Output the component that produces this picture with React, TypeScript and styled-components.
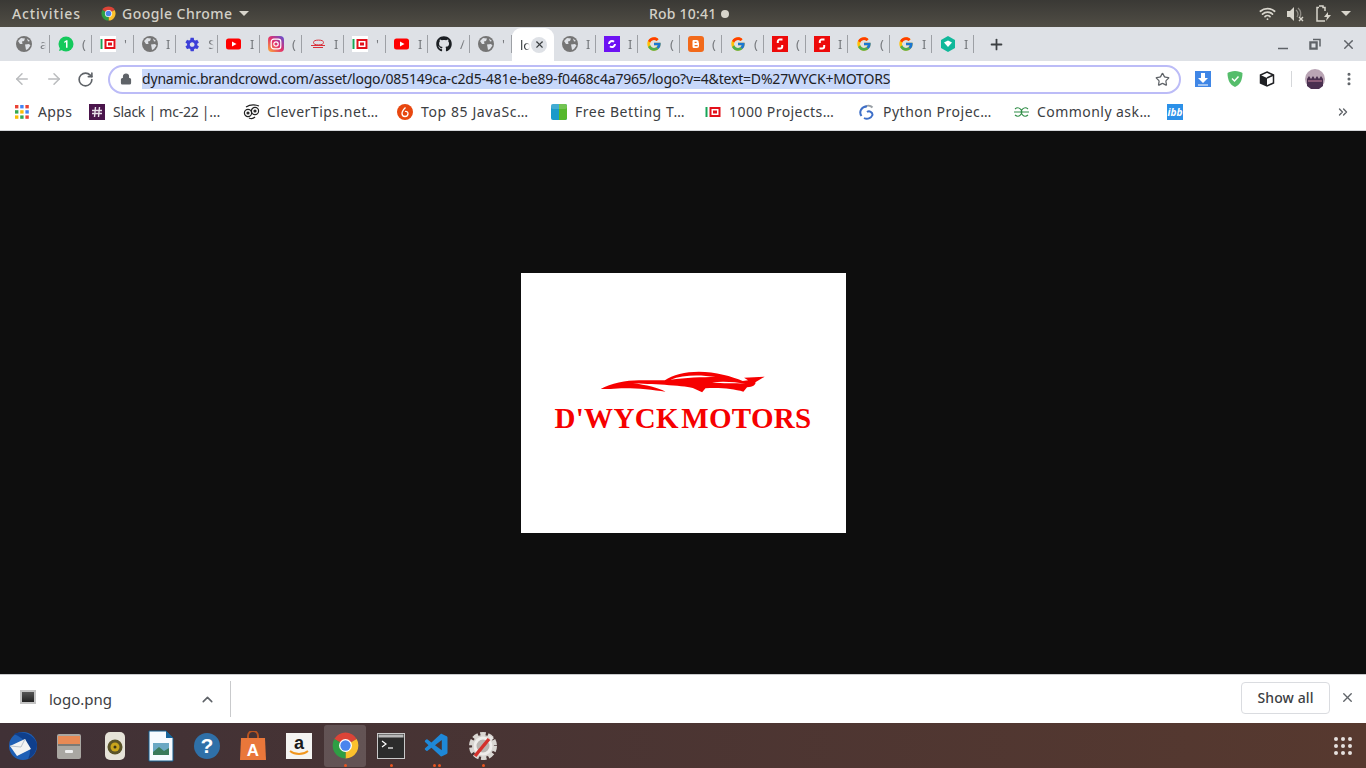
import styled, { createGlobalStyle } from "styled-components";
import { ArrowLeft, ArrowRight, ChevronUp, ChevronsRight, Lock, MoreVertical, Plus, RotateCw, Star, Wifi, X } from "lucide-react";
import { FaGithub } from "react-icons/fa";
import { FcGoogle } from "react-icons/fc";
import { IoMdSettings } from "react-icons/io";
import { VscVscode } from "react-icons/vsc";

const UI_FONT = `"Noto Sans", "Open Sans", sans-serif`;

const GlobalStyle = createGlobalStyle`
  html, body {
    margin: 0;
    height: 100%;
    overflow: hidden;
    background: #0e0e0e;
    font-family: ${UI_FONT};
  }
  * { box-sizing: border-box; }
`;

const ChromeLogo = ({ size }: { size: number }) => (
  <svg width={size} height={size} viewBox="0 0 48 48">
    <path d="M6.7 14A20 20 0 0 1 41.3 14L24 24Z" fill="#db4437" />
    <path d="M41.3 14A20 20 0 0 1 24 44L24 24Z" fill="#fbc02d" />
    <path d="M24 44A20 20 0 0 1 6.7 14L24 24Z" fill="#2f9e44" />
    <circle cx="24" cy="24" r="10" fill="#fff" />
    <circle cx="24" cy="24" r="8" fill="#4a85ed" />
  </svg>
);

const Globe = () => (
  <svg width="16" height="16" viewBox="0 0 16 16">
    <circle cx="8" cy="8" r="8" fill="#757575" />
    <path d="M2 5l3-3 4 .5L8 5 6 5.5 6.5 8 4 8ZM9 8.5l4-.5 1.5 1.5L12 13l-2 1-.5-3ZM11 2.5l3 2.5-2 .5Z" fill="#dee1e6" />
  </svg>
);

const Thousand = () => (
  <svg width="16" height="16" viewBox="0 0 16 16">
    <rect width="16" height="16" fill="#fff" />
    <rect x="0.5" y="3" width="2" height="10" fill="#18a558" />
    <rect x="4.5" y="3" width="11" height="10" fill="#e3111b" />
    <rect x="6.5" y="5" width="7" height="6" fill="#fff" />
    <rect x="8" y="6.5" width="4" height="3" fill="#e3111b" />
  </svg>
);

const YouTube = () => (
  <svg width="16" height="16" viewBox="0 0 16 16">
    <rect y="2.5" width="15" height="11" rx="2.5" fill="#f00" />
    <path d="M6 5.5L10.5 8 6 10.5Z" fill="#fff" />
  </svg>
);

const Instagram = () => (
  <svg width="16" height="16" viewBox="0 0 16 16">
    <defs>
      <linearGradient id="ig" x1="0" y1="1" x2="1" y2="0">
        <stop offset="0" stopColor="#fdb33b" />
        <stop offset="0.5" stopColor="#e1306c" />
        <stop offset="1" stopColor="#5b51d8" />
      </linearGradient>
    </defs>
    <rect width="16" height="16" rx="4" fill="url(#ig)" />
    <rect x="3.2" y="3.2" width="9.6" height="9.6" rx="2.6" fill="none" stroke="#fff" strokeWidth="1.2" />
    <circle cx="8" cy="8" r="2.2" fill="none" stroke="#fff" strokeWidth="1.2" />
  </svg>
);

const Redline = () => (
  <svg width="16" height="16" viewBox="0 0 16 16">
    <ellipse cx="8.5" cy="6.5" rx="5" ry="2.4" fill="none" stroke="#d9303a" strokeWidth="1" />
    <path d="M1 9.5h14M3 11.5h10" stroke="#d9303a" strokeWidth="1" />
  </svg>
);

const WhatsApp = () => (
  <svg width="16" height="16" viewBox="0 0 16 16">
    <circle cx="8" cy="8" r="7.5" fill="#14c95c" />
    <path d="M1 15l1.2-4 2.8 2.8Z" fill="#14c95c" />
    <path d="M6.3 5.6L8.4 4.2h1.1v7.6H8V6L6.3 7Z" fill="#fff" />
  </svg>
);

const Swirl = () => (
  <svg width="16" height="16" viewBox="0 0 16 16">
    <rect width="16" height="16" fill="#6d12f3" />
    <path d="M5 8a3 3 0 0 1 5-2.2M11 8a3 3 0 0 1-5 2.2" fill="none" stroke="#fff" strokeWidth="2" />
  </svg>
);

const Blogger = () => (
  <svg width="16" height="16" viewBox="0 0 16 16">
    <rect width="16" height="16" rx="3" fill="#f26a1b" />
    <path d="M5.5 4h3.2A2 2 0 0 1 10.7 6v1h.3v3a2 2 0 0 1-2 2H6a1.5 1.5 0 0 1-1.5-1.5V5A1 1 0 0 1 5.5 4Z" fill="#fff" />
    <path d="M6.6 6.4h2M6.6 9.6h3" stroke="#f26a1b" strokeWidth="1.2" />
  </svg>
);

const RedS = () => (
  <svg width="16" height="16" viewBox="0 0 16 16">
    <rect width="16" height="16" fill="#ed0a0a" />
    <path d="M10.5 3.5H7.8A2 2 0 0 0 5.8 5.5V7M5.5 12.5h2.7a2 2 0 0 0 2-2V9" fill="none" stroke="#fff" strokeWidth="2" />
  </svg>
);

const Hex = () => (
  <svg width="16" height="16" viewBox="0 0 16 16">
    <path d="M8 0l7 4v8l-7 4-7-4V4Z" fill="#10b89a" />
    <path d="M4 6.5L8 4.5l4 2-4 4.5Z" fill="#fff" />
  </svg>
);

type TabData = { icon: React.ReactNode; hint: string };

const leftTabs: TabData[] = [
  { icon: <Globe />, hint: "a" },
  { icon: <WhatsApp />, hint: "(" },
  { icon: <Thousand />, hint: "'" },
  { icon: <Globe />, hint: "I" },
  { icon: <IoMdSettings size={17} color="#3c3fd8" />, hint: "S" },
  { icon: <YouTube />, hint: "I" },
  { icon: <Instagram />, hint: "(" },
  { icon: <Redline />, hint: "I" },
  { icon: <Thousand />, hint: "'" },
  { icon: <YouTube />, hint: "I" },
  { icon: <FaGithub size={16} color="#1b1f23" />, hint: "/" },
  { icon: <Globe />, hint: "'" },
];

const rightTabs: TabData[] = [
  { icon: <Globe />, hint: "I" },
  { icon: <Swirl />, hint: "I" },
  { icon: <FcGoogle size={16} />, hint: "(" },
  { icon: <Blogger />, hint: "(" },
  { icon: <FcGoogle size={16} />, hint: "(" },
  { icon: <RedS />, hint: "(" },
  { icon: <RedS />, hint: "I" },
  { icon: <FcGoogle size={16} />, hint: "(" },
  { icon: <FcGoogle size={16} />, hint: "I" },
  { icon: <Hex />, hint: "I" },
];

const AppsIcon = () => (
  <svg width="14" height="14" viewBox="0 0 14 14">
    {["#ea4335", "#4285f4", "#ea4335", "#34a853", "#fbbc05", "#4285f4", "#fbbc05", "#34a853", "#ea4335"].map((c, i) => (
      <rect key={i} x={(i % 3) * 5.2} y={Math.floor(i / 3) * 5.2} width="3.4" height="3.4" fill={c} />
    ))}
  </svg>
);

const SlackIcon = () => (
  <svg width="16" height="16" viewBox="0 0 16 16">
    <rect width="16" height="16" fill="#4a154b" />
    <path d="M6.5 3l-1 10M10.500 3l-1 10M3 6.500h10M3 9.500h10" stroke="#e8dfe8" strokeWidth="1.400" />
  </svg>
);

const OwlIcon = () => (
  <svg width="18" height="16" viewBox="0 0 18 16" fill="none" stroke="#222" strokeWidth="1.2">
    <circle cx="5" cy="9" r="3.6" />
    <circle cx="12" cy="7" r="3.6" />
    <circle cx="12" cy="7" r="1" fill="#222" />
    <circle cx="5" cy="9" r="1" fill="#222" />
    <path d="M3 3c3-2 8-3 13-1M6 14c2 1 4 1 6-1" />
  </svg>
);

const FireIcon = () => (
  <svg width="16" height="16" viewBox="0 0 16 16">
    <circle cx="8" cy="8" r="8" fill="#e8470f" />
    <path d="M8.5 3.5C6.5 5.5 5 7.5 5 9.5a3 3 0 0 0 6 0c0-1.5-1.5-2.5-3-2" fill="none" stroke="#fff" strokeWidth="1.3" />
  </svg>
);

const BettingIcon = () => (
  <svg width="16" height="16" viewBox="0 0 16 16">
    <rect width="16" height="16" rx="2" fill="#1a9ac9" />
    <path d="M8 0h6a2 2 0 0 1 2 2v12a2 2 0 0 1-2 2H8Z" fill="#55b82d" />
    <rect y="0" width="16" height="5" rx="2" fill="#fff" opacity="0.18" />
  </svg>
);

const PythonIcon = () => (
  <svg width="16" height="16" viewBox="0 0 16 16" fill="none">
    <path d="M13.5 3.5A6 6 0 0 0 5.5 3" stroke="#9aa0a6" strokeWidth="2" />
    <path d="M2.5 12A6 6 0 0 1 8 2.5M8 8a3.5 3.5 0 0 1 5.5 3A6 6 0 0 1 5 14" stroke="#3e6fc8" strokeWidth="2" />
  </svg>
);

const GfgIcon = () => (
  <svg width="17" height="16" viewBox="0 0 17 16" fill="none" stroke="#2f8d46" strokeWidth="1.1">
    <path d="M1 8h15M2 5A4 4 0 1 1 2 11M15 5A4 4 0 1 0 15 11" />
  </svg>
);

const IbbIcon = () => <IbbBadge>ibb</IbbBadge>;

const bookmarks = [
  { icon: <AppsIcon />, label: "Apps", width: 35, spacing: 0.4, gap: 9, next: 16 },
  { icon: <SlackIcon />, label: "Slack | mc-22 |…", width: 107, spacing: -0.25, gap: 8, next: 23 },
  { icon: <OwlIcon />, label: "CleverTips.net…", width: 112, spacing: 0.5, gap: 6, next: 18 },
  { icon: <FireIcon />, label: "Top 85 JavaSc…", width: 110, spacing: 0.6, gap: 8, next: 20 },
  { icon: <BettingIcon />, label: "Free Betting T…", width: 111, spacing: 0.55, gap: 8, next: 19 },
  { icon: <Thousand />, label: "1000 Projects…", width: 106, spacing: 0.43, gap: 8, next: 24 },
  { icon: <PythonIcon />, label: "Python Projec…", width: 110, spacing: 0.5, gap: 8, next: 20 },
  { icon: <GfgIcon />, label: "Commonly ask…", width: 114, spacing: 0.45, gap: 7, next: 16 },
  { icon: <IbbIcon />, label: "", width: 0, spacing: 0, gap: 0, next: 0 },
];

const Folder = () => (
  <svg width="30" height="30" viewBox="0 0 30 30">
    <rect x="3" y="3" width="24" height="25" rx="2" fill="#a9a7a2" />
    <rect x="4" y="5" width="22" height="8" fill="#e88a55" />
    <rect x="4" y="13" width="22" height="2" fill="#7c7a75" />
    <rect x="11" y="19" width="8" height="3" rx="1" fill="#eee" />
  </svg>
);

const SpeakerApp = () => (
  <svg width="30" height="32" viewBox="0 0 30 32">
    <rect x="5" y="2" width="20" height="28" rx="5" fill="#e6e3d8" />
    <circle cx="15" cy="17" r="7.5" fill="#5a5327" />
    <circle cx="15" cy="17" r="4.5" fill="#c9a51c" />
    <circle cx="15" cy="17" r="1.5" fill="#3b3515" />
  </svg>
);

const Writer = () => (
  <svg width="26" height="32" viewBox="0 0 26 32">
    <path d="M1 1h17l7 7v23H1Z" fill="#f7fbff" stroke="#155f8f" />
    <path d="M18 1l7 7h-7Z" fill="#17649b" />
    <rect x="5" y="13" width="16" height="12" fill="#6aa8c4" />
    <path d="M5 22l6-5 5 4 5-3v7H5Z" fill="#3a7a5a" />
  </svg>
);

const HelpApp = () => (
  <svg width="28" height="28" viewBox="0 0 28 28">
    <circle cx="14" cy="14" r="13" fill="#2f70a8" />
    <text x="14" y="21" textAnchor="middle" fontSize="21" fontWeight="700" fill="#fff" fontFamily="'Liberation Sans', sans-serif">?</text>
  </svg>
);

const StoreApp = () => (
  <svg width="28" height="30" viewBox="0 0 28 30">
    <path d="M9 8V5a5 5 0 0 1 10 0v3" fill="none" stroke="#b9531f" strokeWidth="2" />
    <path d="M2 7h24l1 22H1Z" fill="#e9773a" />
    <text x="14" y="25" textAnchor="middle" fontSize="17" fontWeight="700" fill="#fff" fontFamily="'Liberation Sans', sans-serif">A</text>
  </svg>
);

const AmazonApp = () => (
  <svg width="26" height="26" viewBox="0 0 26 26">
    <rect width="26" height="26" fill="#f4f4f2" />
    <text x="13" y="16" textAnchor="middle" fontSize="18" fontWeight="700" fill="#1a1a1a" fontFamily="'Liberation Sans', sans-serif">a</text>
    <path d="M4 18c5 4 13 4 18 0" fill="none" stroke="#f0961e" strokeWidth="1.8" />
  </svg>
);

const Terminal = () => (
  <svg width="28" height="26" viewBox="0 0 28 26">
    <rect x="0.5" y="0.5" width="27" height="25" fill="#2c2c2c" stroke="#c9c9c9" />
    <rect x="1.5" y="1.5" width="25" height="3" fill="#b8b8b8" />
    <path d="M5 8l4 3-4 3" fill="none" stroke="#fff" strokeWidth="1.2" />
    <path d="M11 15h5" stroke="#fff" strokeWidth="1.2" />
  </svg>
);

const SettingsApp = () => (
  <svg width="30" height="30" viewBox="0 0 30 30">
    <circle cx="15" cy="15" r="11" fill="#cfcbc7" stroke="#d9d6d2" strokeWidth="6" strokeDasharray="5 2" />
    <circle cx="15" cy="15" r="8" fill="#b9b5b1" stroke="#efedeb" strokeWidth="3" />
    <path d="M7 25L21 8" stroke="#d3312c" strokeWidth="3.5" />
    <path d="M20 4l6 3-3 3Z" fill="#e9e7e5" />
  </svg>
);

const MailApp = () => (
  <svg width="30" height="30" viewBox="0 0 30 30">
    <circle cx="15" cy="15" r="14" fill="#1f5fb5" />
    <path d="M6 3C14-1 26 3 29 13c0 6-3 12-9 15 4-8 3-17-14-25Z" fill="#0f3f8c" />
    <path d="M2 15l15-7 6 10-14 7Z" fill="#f3f3f3" />
    <path d="M2 15l11 1 4-8" fill="none" stroke="#b9c2cc" strokeWidth="1" />
  </svg>
);

const dockApps = [
  { icon: <MailApp />, dots: 0, active: false },
  { icon: <Folder />, dots: 0, active: false },
  { icon: <SpeakerApp />, dots: 0, active: false },
  { icon: <Writer />, dots: 0, active: false },
  { icon: <HelpApp />, dots: 0, active: false },
  { icon: <StoreApp />, dots: 0, active: false },
  { icon: <AmazonApp />, dots: 0, active: false },
  { icon: <ChromeLogo size={31} />, dots: 1, active: true },
  { icon: <Terminal />, dots: 1, active: false },
  { icon: <VscVscode size={28} color="#1e88d8" />, dots: 2, active: false },
  { icon: <SettingsApp />, dots: 1, active: false },
];

const App = () => {
  return (
    <Page>
      <GlobalStyle />
      <TopBar>
        <TopLeft>
          <Activities>Activities</Activities>
          <AppMenu>
            <ChromeLogo size={17} />
            <span>Google Chrome</span>
            <Caret />
          </AppMenu>
        </TopLeft>
        <Clock>
          Rob 10:41 <ClockDot />
        </Clock>
        <Tray>
          <Wifi size={17} strokeWidth={2.5} color="#d8d5cc" />
          <svg width="18" height="16" viewBox="0 0 18 16">
            <path d="M1 5h3l4-4v14l-4-4H1Z" fill="#d8d5cc" />
            <path d="M10 4a5 5 0 0 1 1 7M12 2a8 8 0 0 1 2 9" fill="none" stroke="#8f8c85" strokeWidth="1.3" />
            <path d="M13 11l4 4M17 11l-4 4" stroke="#d8d5cc" strokeWidth="1.4" />
          </svg>
          <svg width="18" height="18" viewBox="0 0 18 18">
            <path d="M5 1h4v1.5h2V6M11 16H3V2.5h2" fill="none" stroke="#d8d5cc" strokeWidth="1.5" />
            <path d="M14 7l-4 5h3l-1 4 5-6h-3Z" fill="#d8d5cc" />
          </svg>
          <TrayCaret />
        </Tray>
      </TopBar>

      <TabStrip>
        {leftTabs.map((tab, i) => (
          <Tab key={i}>
            {tab.icon}
            <TabHint>{tab.hint}</TabHint>
          </Tab>
        ))}
        <ActiveTab>
          <ActiveTabText>lo</ActiveTabText>
          <TabClose>
            <X size={11} strokeWidth={2.5} color="#3c4043" />
          </TabClose>
        </ActiveTab>
        {rightTabs.map((tab, i) => (
          <Tab key={i}>
            {tab.icon}
            <TabHint>{tab.hint}</TabHint>
          </Tab>
        ))}
        <NewTab>
          <Plus size={17} strokeWidth={2.5} color="#3c4043" />
        </NewTab>
        <WindowControls>
          <svg width="12" height="12" viewBox="0 0 12 12">
            <path d="M1 10.5h10" stroke="#5f6368" strokeWidth="1.5" />
          </svg>
          <svg width="12" height="12" viewBox="0 0 12 12" fill="none" stroke="#5f6368" strokeWidth="1.5">
            <rect x="1" y="4" width="7" height="7" fill="#5f6368" />
            <rect x="2.5" y="5.5" width="4" height="4" fill="#dee1e6" stroke="none" />
            <path d="M4 1.5h7v7" />
          </svg>
          <X size={15} strokeWidth={2.2} color="#5f6368" />
        </WindowControls>
      </TabStrip>

      <Toolbar>
        <NavButtons>
          <ArrowLeft size={18} color="#babcbe" strokeWidth={2} />
          <ArrowRight size={18} color="#babcbe" strokeWidth={2} />
          <RotateCw size={17} color="#5f6368" strokeWidth={2.3} />
        </NavButtons>
        <UrlBar>
          <Lock size={12} color="#5f6368" fill="#5f6368" strokeWidth={2.4} />
          <UrlText>dynamic.brandcrowd.com/asset/logo/085149ca-c2d5-481e-be89-f0468c4a7965/logo?v=4&amp;text=D%27WYCK+MOTORS</UrlText>
          <BookmarkStar>
            <Star size={15} color="#5f6368" strokeWidth={2} />
          </BookmarkStar>
        </UrlBar>
        <Extensions>
          <svg width="16" height="16" viewBox="0 0 16 16">
            <rect width="16" height="16" fill="#3f86e6" />
            <path d="M6 2h4v5h3l-5 5-5-5h3Z" fill="#fff" />
            <path d="M3 14h10" stroke="#fff" />
          </svg>
          <svg width="16" height="18" viewBox="0 0 16 18">
            <path d="M8 1c3 0 6 1 7.5 2C15.5 10 13 15 8 17 3 15 .5 10 .5 3 2 2 5 1 8 1Z" fill="#55bd6b" />
            <path d="M5 8.5l2.5 2.5L11.5 6.5" fill="none" stroke="#fff" strokeWidth="1.5" />
          </svg>
          <svg width="16" height="16" viewBox="0 0 16 16">
            <path d="M8 1l6.5 3v8L8 15 1.5 12V4Z" fill="#fff" stroke="#202124" strokeWidth="1.5" />
            <path d="M1.5 4L8 7v8L1.5 12Z" fill="#202124" />
            <path d="M8 7l6.5-3" stroke="#202124" strokeWidth="1.5" />
          </svg>
          <ToolbarDivider />
          <Avatar>
            <svg width="20" height="20" viewBox="0 0 20 20">
              <circle cx="10" cy="10" r="10" fill="#b9a4b4" />
              <path d="M2 17V10l2-3 2 3 2-3 2 3 2-3 2 3 2-3 2 3v7l-4 3H6Z" fill="#4a3050" />
              <path d="M3 12h14" stroke="#a06a84" strokeWidth="1.5" />
            </svg>
          </Avatar>
          <MoreVertical size={16} color="#5f6368" strokeWidth={2.6} />
        </Extensions>
      </Toolbar>

      <BookmarkBar>
        {bookmarks.map((b, i) => (
          <Bookmark key={i} $gap={b.gap} $next={b.next}>
            {b.icon}
            {b.label && (
              <BookmarkLabel $width={b.width} $spacing={b.spacing}>
                {b.label}
              </BookmarkLabel>
            )}
          </Bookmark>
        ))}
        <MoreBookmarks>
          <ChevronsRight size={14} color="#5f6368" strokeWidth={2.4} />
        </MoreBookmarks>
      </BookmarkBar>

      <Viewer>
        <LogoCard>
          <svg width="168" height="25" viewBox="180 32 505 75">
            <path
              d="M185 92C215 76 262 66 300 66L378 66C400 49 440 40 480 40C530 40 580 54 612 68L628 66L616 58L678 55L650 72C652 78 645 85 625 87L614 100C585 92 545 87 500 90L490 102L462 89C430 80 330 78 282 74C320 80 360 88 380 100C330 92 260 86 215 92Z"
              fill="#f60000"
            />
            <path d="M395 64C430 50 480 48 530 56C490 56 440 58 395 64Z" fill="#fff" />
            <path d="M520 72C560 68 590 72 620 76C590 76 550 76 520 72Z" fill="#fff" />
          </svg>
          <LogoText>D'WYCK MOTORS</LogoText>
        </LogoCard>
      </Viewer>

      <DownloadShelf>
        <DownloadItem>
          <FileThumb />
          <FileName>logo.png</FileName>
          <ChevronUp size={17} color="#5f6368" strokeWidth={2.2} />
        </DownloadItem>
        <ShelfDivider />
        <ShowAll>Show all</ShowAll>
        <ShelfClose>
          <X size={15} color="#5f6368" strokeWidth={2.2} />
        </ShelfClose>
      </DownloadShelf>

      <Dock>
        {dockApps.map((app, i) => (
          <DockSlot key={i} $active={app.active}>
            {app.icon}
            {app.dots > 0 && (
              <DockDots>
                {Array.from({ length: app.dots }).map((_, d) => (
                  <DockDot key={d} />
                ))}
              </DockDots>
            )}
          </DockSlot>
        ))}
        <AppGrid>
          {Array.from({ length: 9 }).map((_, i) => (
            <AppGridDot key={i} />
          ))}
        </AppGrid>
      </Dock>
    </Page>
  );
};

export default App;

const Page = styled.div`
  width: 100%;
  height: 100vh;
  display: flex;
  flex-direction: column;
`;

const TopBar = styled.header`
  flex: 0 0 27px;
  display: flex;
  align-items: center;
  background: linear-gradient(#3a3935, #504d45);
  color: #d3d0c7;
  font-size: 14px;
  font-weight: 500;
`;

const TopLeft = styled.div`
  flex: 0 0 649px;
  display: flex;
  align-items: center;
  padding-left: 12px;
`;

const Activities = styled.span`
  width: 68px;
  letter-spacing: 0.85px;
`;

const AppMenu = styled.div`
  margin-left: 20px;
  display: flex;
  align-items: center;
  gap: 5px;

  & > span {
    width: 111px;
    white-space: nowrap;
    letter-spacing: 0.45px;
  }
`;

const Caret = styled.i`
  width: 0;
  height: 0;
  border-left: 5px solid transparent;
  border-right: 5px solid transparent;
  border-top: 5px solid #d8d5cc;
  margin-left: 1px;
`;

const TrayCaret = styled(Caret)`
  margin-left: -1px;
`;

const Clock = styled.div`
  display: flex;
  align-items: center;
  gap: 5px;
  white-space: nowrap;
  letter-spacing: 0.2px;
`;

const ClockDot = styled.i`
  width: 8px;
  height: 8px;
  border-radius: 50%;
  background: #d8d5cc;
`;

const Tray = styled.div`
  margin-left: auto;
  padding-right: 15px;
  display: flex;
  align-items: center;
  gap: 10px;
`;

const TabStrip = styled.div`
  flex: 0 0 34px;
  display: flex;
  align-items: center;
  padding-left: 8px;
  background: #dee1e6;
`;

const Tab = styled.div`
  position: relative;
  width: 42px;
  height: 18px;
  display: flex;
  align-items: center;
  padding-left: 8px;
  flex: none;
  border-right: 1px solid #9da0a5;
`;

const TabHint = styled.span`
  margin-left: 8px;
  width: 9px;
  color: #777a7e;
  font-size: 13px;
  line-height: 16px;
  mask-image: linear-gradient(90deg, #000 30%, transparent 65%);
`;

const ActiveTab = styled.div`
  flex: none;
  align-self: flex-end;
  width: 42px;
  height: 33px;
  background: #fff;
  border-radius: 9px 9px 0 0;
  display: flex;
  align-items: center;
  padding-left: 8px;
`;

const ActiveTabText = styled.span`
  width: 11px;
  color: #3c4043;
  font-size: 13px;
  white-space: nowrap;
  mask-image: linear-gradient(90deg, #000 50%, transparent 90%);
`;

const TabClose = styled.span`
  width: 16px;
  height: 16px;
  border-radius: 50%;
  background: #dee1e6;
  display: flex;
  align-items: center;
  justify-content: center;
`;

const NewTab = styled.div`
  margin-left: 14px;
  display: flex;
`;

const WindowControls = styled.div`
  margin-left: auto;
  padding-right: 10px;
  display: flex;
  align-items: center;
  gap: 20px;
`;

const Toolbar = styled.div`
  flex: 0 0 36px;
  display: flex;
  align-items: center;
  background: #fff;
`;

const NavButtons = styled.div`
  width: 108px;
  flex: none;
  padding-left: 13px;
  display: flex;
  align-items: center;
  gap: 14px;
`;

const UrlBar = styled.div`
  width: 1073px;
  height: 29px;
  flex: none;
  display: flex;
  align-items: center;
  padding-left: 10px;
  border: 2px solid #bcbcf7;
  border-radius: 15px;
  background: #fff;
`;

const UrlText = styled.span`
  margin-left: 10px;
  background: #c8d8fa;
  color: #202124;
  font-size: 14px;
  line-height: 20px;
  letter-spacing: -0.185px;
  white-space: nowrap;
`;

const BookmarkStar = styled.span`
  margin-left: auto;
  padding-right: 9px;
  display: flex;
`;

const Extensions = styled.div`
  flex: 1;
  padding-left: 14px;
  display: flex;
  align-items: center;
  gap: 16px;
`;

const ToolbarDivider = styled.i`
  width: 1px;
  height: 16px;
  background: #d5d7da;
`;

const Avatar = styled.span`
  width: 20px;
  height: 20px;
  margin-left: -3px;
  display: flex;
`;

const BookmarkBar = styled.div`
  flex: 0 0 34px;
  display: flex;
  align-items: center;
  padding-left: 15px;
  padding-bottom: 4px;
  background: #fff;
  border-bottom: 1px solid #d5d7da;
`;

const Bookmark = styled.div<{ $gap: number; $next: number }>`
  display: flex;
  align-items: center;
  gap: ${(props) => props.$gap}px;
  margin-right: ${(props) => props.$next}px;
  flex: none;
`;

const BookmarkLabel = styled.span<{ $width: number; $spacing: number }>`
  width: ${(props) => props.$width}px;
  color: #3c4043;
  font-size: 14px;
  letter-spacing: ${(props) => props.$spacing}px;
  white-space: nowrap;
`;

const IbbBadge = styled.span`
  width: 16px;
  height: 16px;
  background: #2b90e8;
  color: #fff;
  font: italic 700 10px/16px "Noto Sans", sans-serif;
  text-align: center;
`;

const MoreBookmarks = styled.div`
  margin-left: auto;
  padding-right: 16px;
  display: flex;
`;

const Viewer = styled.main`
  flex: 1;
  display: flex;
  align-items: center;
  justify-content: center;
  background: #0e0e0e;
`;

const LogoCard = styled.div`
  width: 325px;
  height: 260px;
  padding-bottom: 3px;
  background: #fff;
  display: flex;
  flex-direction: column;
  align-items: center;
  justify-content: center;
  gap: 8px;
`;

const LogoText = styled.div`
  color: #f60000;
  font-family: "Liberation Serif", serif;
  font-weight: 700;
  font-size: 29px;
  line-height: 32px;
  letter-spacing: 0.3px;
  word-spacing: -5px;
  white-space: nowrap;
`;

const DownloadShelf = styled.div`
  flex: 0 0 49px;
  display: flex;
  align-items: center;
  background: #fff;
  border-top: 1px solid #c9cacc;
`;

const DownloadItem = styled.div`
  width: 230px;
  flex: none;
  padding-left: 20px;
  display: flex;
  align-items: center;
  gap: 13px;

  & > svg {
    margin-left: 75px;
  }
`;

const FileThumb = styled.i`
  width: 16px;
  height: 14px;
  margin-top: -4px;
  border: 2px solid #c4c4c4;
  background: linear-gradient(#555, #222);
`;

const FileName = styled.span`
  width: 62px;
  color: #3c4043;
  font-size: 15px;
`;

const ShelfDivider = styled.i`
  width: 1px;
  height: 36px;
  background: #c9cacc;
`;

const ShowAll = styled.button`
  margin-left: auto;
  margin-bottom: 3px;
  width: 89px;
  height: 32px;
  padding: 0;
  background: #fff;
  border: 1px solid #dadce0;
  border-radius: 4px;
  color: #3c4043;
  font-family: ${UI_FONT};
  font-size: 14px;
  font-weight: 500;
  letter-spacing: 0.1px;
`;

const ShelfClose = styled.span`
  margin: 0 11px 3px 10px;
  display: flex;
`;

const Dock = styled.footer`
  flex: 0 0 45px;
  display: flex;
  align-items: center;
  background: linear-gradient(90deg, #403136, #57392f);
`;

const DockSlot = styled.div<{ $active: boolean }>`
  position: relative;
  width: 42px;
  height: 42px;
  margin: 0 2px;
  flex: none;
  display: flex;
  align-items: center;
  justify-content: center;
  border-radius: 3px;
  background: ${(props) => (props.$active ? "rgba(255, 255, 255, 0.16)" : "transparent")};
`;

const DockDots = styled.div`
  position: absolute;
  left: 0;
  right: 0;
  bottom: 0;
  display: flex;
  justify-content: center;
  gap: 2px;
`;

const DockDot = styled.i`
  width: 3px;
  height: 3px;
  border-radius: 50%;
  background: #e95420;
`;

const AppGrid = styled.div`
  margin-left: auto;
  margin-right: 14px;
  display: grid;
  grid-template-columns: repeat(3, 4px);
  gap: 3px;
`;

const AppGridDot = styled.i`
  width: 4px;
  height: 4px;
  border-radius: 50%;
  background: #e6e1de;
`;
